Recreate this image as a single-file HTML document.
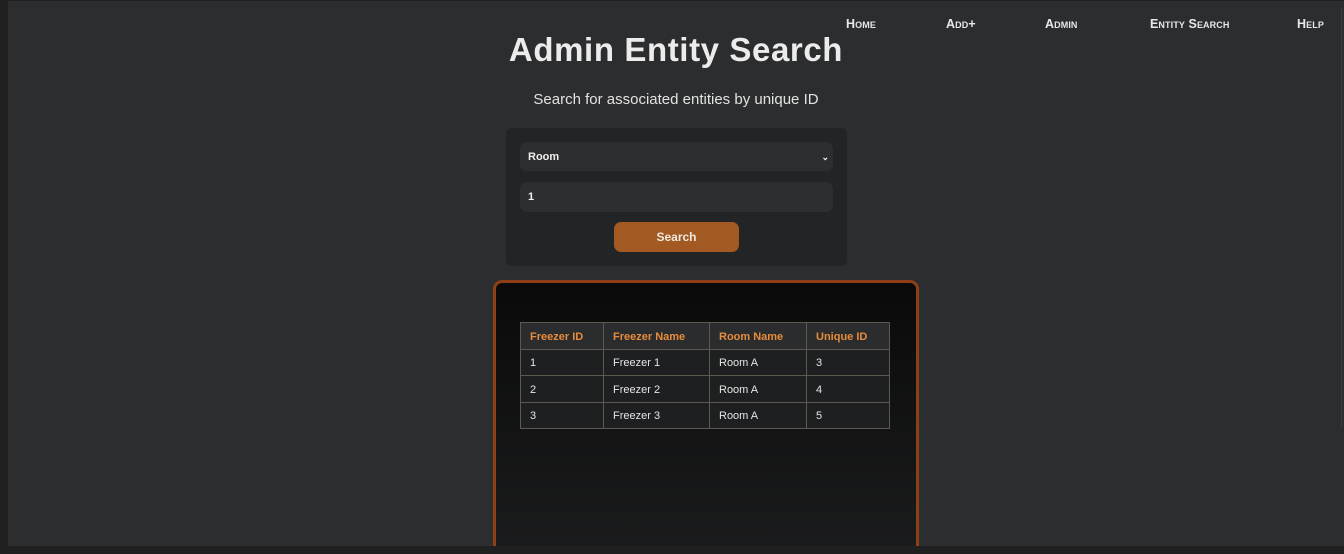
<!DOCTYPE html>
<html><head><meta charset="utf-8"><style>
*{box-sizing:border-box;margin:0;padding:0}
html,body{width:1344px;height:554px;overflow:hidden}
body{background:#202020;font-family:"Liberation Sans",sans-serif;position:relative}
.main{position:absolute;left:8px;top:1px;width:1336px;height:545px;background:#2c2d2f}
.nav a{position:absolute;top:17px;color:#e8e8e8;font-weight:bold;font-size:12.5px;font-variant:small-caps;text-decoration:none;letter-spacing:0.1px}
h1{position:absolute;left:0;width:1352px;text-align:center;top:31px;color:#ececec;font-size:33px;font-weight:bold;letter-spacing:0.6px}
.sub{position:absolute;left:0;width:1352px;text-align:center;top:91px;color:#e2e2e2;font-size:15px}
.card{position:absolute;left:506px;top:128px;width:341px;height:138px;background:#232426;border-radius:6px}
.inp{position:absolute;left:520px;width:313px;background:#2d2e30;border-radius:7px;color:#eee;font-weight:bold;font-size:11px;padding-left:8px}
.btn{position:absolute;left:614px;top:222px;width:125px;height:30px;background:#a25a22;border-radius:7px;color:#f0e8e0;font-weight:bold;font-size:12px;text-align:center;line-height:30px}
.panel{position:absolute;left:493px;top:280px;width:426px;height:280px;border:3px solid #8e3f17;border-radius:9px;background:linear-gradient(#0a0a0a,#1b1c1d)}
table{position:absolute;left:520px;top:322px;border-collapse:collapse;font-size:11px}
td,th{border:1px solid #5c5a50;height:26.5px;padding:2px 0 0 9px;text-align:left;color:#e6e6e6;font-weight:normal;background:#1e1f21}
th{color:#e88c3c;font-weight:bold;background:#2a2c2d}
</style></head><body>
<div class="main"></div>
<div class="nav"><a style="left:846px">Home</a><a style="left:946px">Add+</a><a style="left:1045px">Admin</a><a style="left:1150px">Entity Search</a><a style="left:1297px">Help</a></div>
<div style="position:absolute;left:1341px;top:8px;width:1px;height:420px;background:#3a3b3d"></div>
<h1>Admin Entity Search</h1>
<div class="sub">Search for associated entities by unique ID</div>
<div class="card"></div>
<div class="inp" style="top:142px;height:29px;line-height:31px">Room<span style="position:absolute;right:4px;font-size:9px">&#8964;</span></div>
<div class="inp" style="top:182px;height:30px;line-height:30px">1</div>
<div class="btn">Search</div>
<div class="panel"></div>
<table>
<tr><th style="width:83px">Freezer ID</th><th style="width:106px">Freezer Name</th><th style="width:97px">Room Name</th><th style="width:83px">Unique ID</th></tr>
<tr><td>1</td><td>Freezer 1</td><td>Room A</td><td>3</td></tr>
<tr><td>2</td><td>Freezer 2</td><td>Room A</td><td>4</td></tr>
<tr><td>3</td><td>Freezer 3</td><td>Room A</td><td>5</td></tr>
</table>
<div style="position:absolute;left:0;top:546px;width:1344px;height:8px;background:#202020;z-index:5"></div>
</body></html>
